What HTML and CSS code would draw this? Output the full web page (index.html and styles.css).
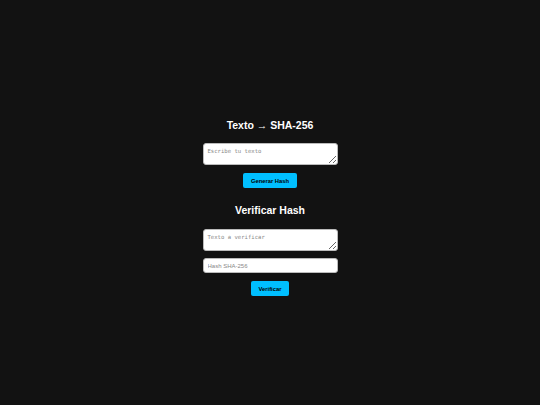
FILE: index.html
```html
<!DOCTYPE html>
<html lang="es">
<head>
  <meta charset="UTF-8" />
  <title>Texto → SHA-256</title>
  <meta name="viewport" content="width=device-width, initial-scale=1" />
  <link rel="stylesheet" href="styles.css">
</head>
<body>
  <div class="container">
    <h2>Texto → SHA-256</h2>
    <textarea id="inputText" class="field field-area" placeholder="Escribe tu texto"></textarea>
    <button class="btn btn-generate">Generar Hash</button>

    <h2 class="second">Verificar Hash</h2>
    <textarea id="verifyText" class="field field-area" placeholder="Texto a verificar"></textarea>
    <input type="text" id="verifyHash" class="field field-input" placeholder="Hash SHA-256" />
    <button class="btn btn-verify">Verificar</button>
  </div>
</body>
</html>
```

FILE: styles.css
```css
* {
  box-sizing: border-box;
}

body {
  margin: 0;
  padding-top: 119px;
  background: #121212;
  color: #fff;
  font-family: 'Liberation Sans', Arial, sans-serif;
}

.container {
  width: 135px;
  margin: 0 auto;
  display: flex;
  flex-direction: column;
  align-items: center;
}

h2 {
  margin: 0 0 12px;
  font-size: 10.5px;
  line-height: 12px;
  font-weight: 700;
  color: #fff;
  white-space: nowrap;
}

h2.second {
  margin-bottom: 13px;
}

.field {
  width: 135px;
  background: #fff;
  border: 1px solid #bbb;
  border-radius: 3px;
  color: #000;
  margin: 0;
}

.field-area {
  height: 22px;
  padding: 4px;
  font-family: 'DejaVu Sans Mono', 'Liberation Mono', monospace;
  font-size: 5.6px;
  margin-bottom: 8px;
}

#verifyText {
  margin-bottom: 7px;
}

.field-input {
  height: 15px;
  padding: 0 4px;
  font-family: 'Liberation Sans', Arial, sans-serif;
  font-size: 6px;
  margin-bottom: 8px;
}

.field::placeholder {
  color: #888;
}

.btn {
  height: 15px;
  padding: 0 8px;
  border: none;
  border-radius: 2px;
  background: #00bfff;
  color: #000;
  font-family: 'Liberation Sans', Arial, sans-serif;
  font-size: 5.8px;
  font-weight: 700;
  cursor: pointer;
}

.btn-generate {
  margin-bottom: 16px;
}
```
